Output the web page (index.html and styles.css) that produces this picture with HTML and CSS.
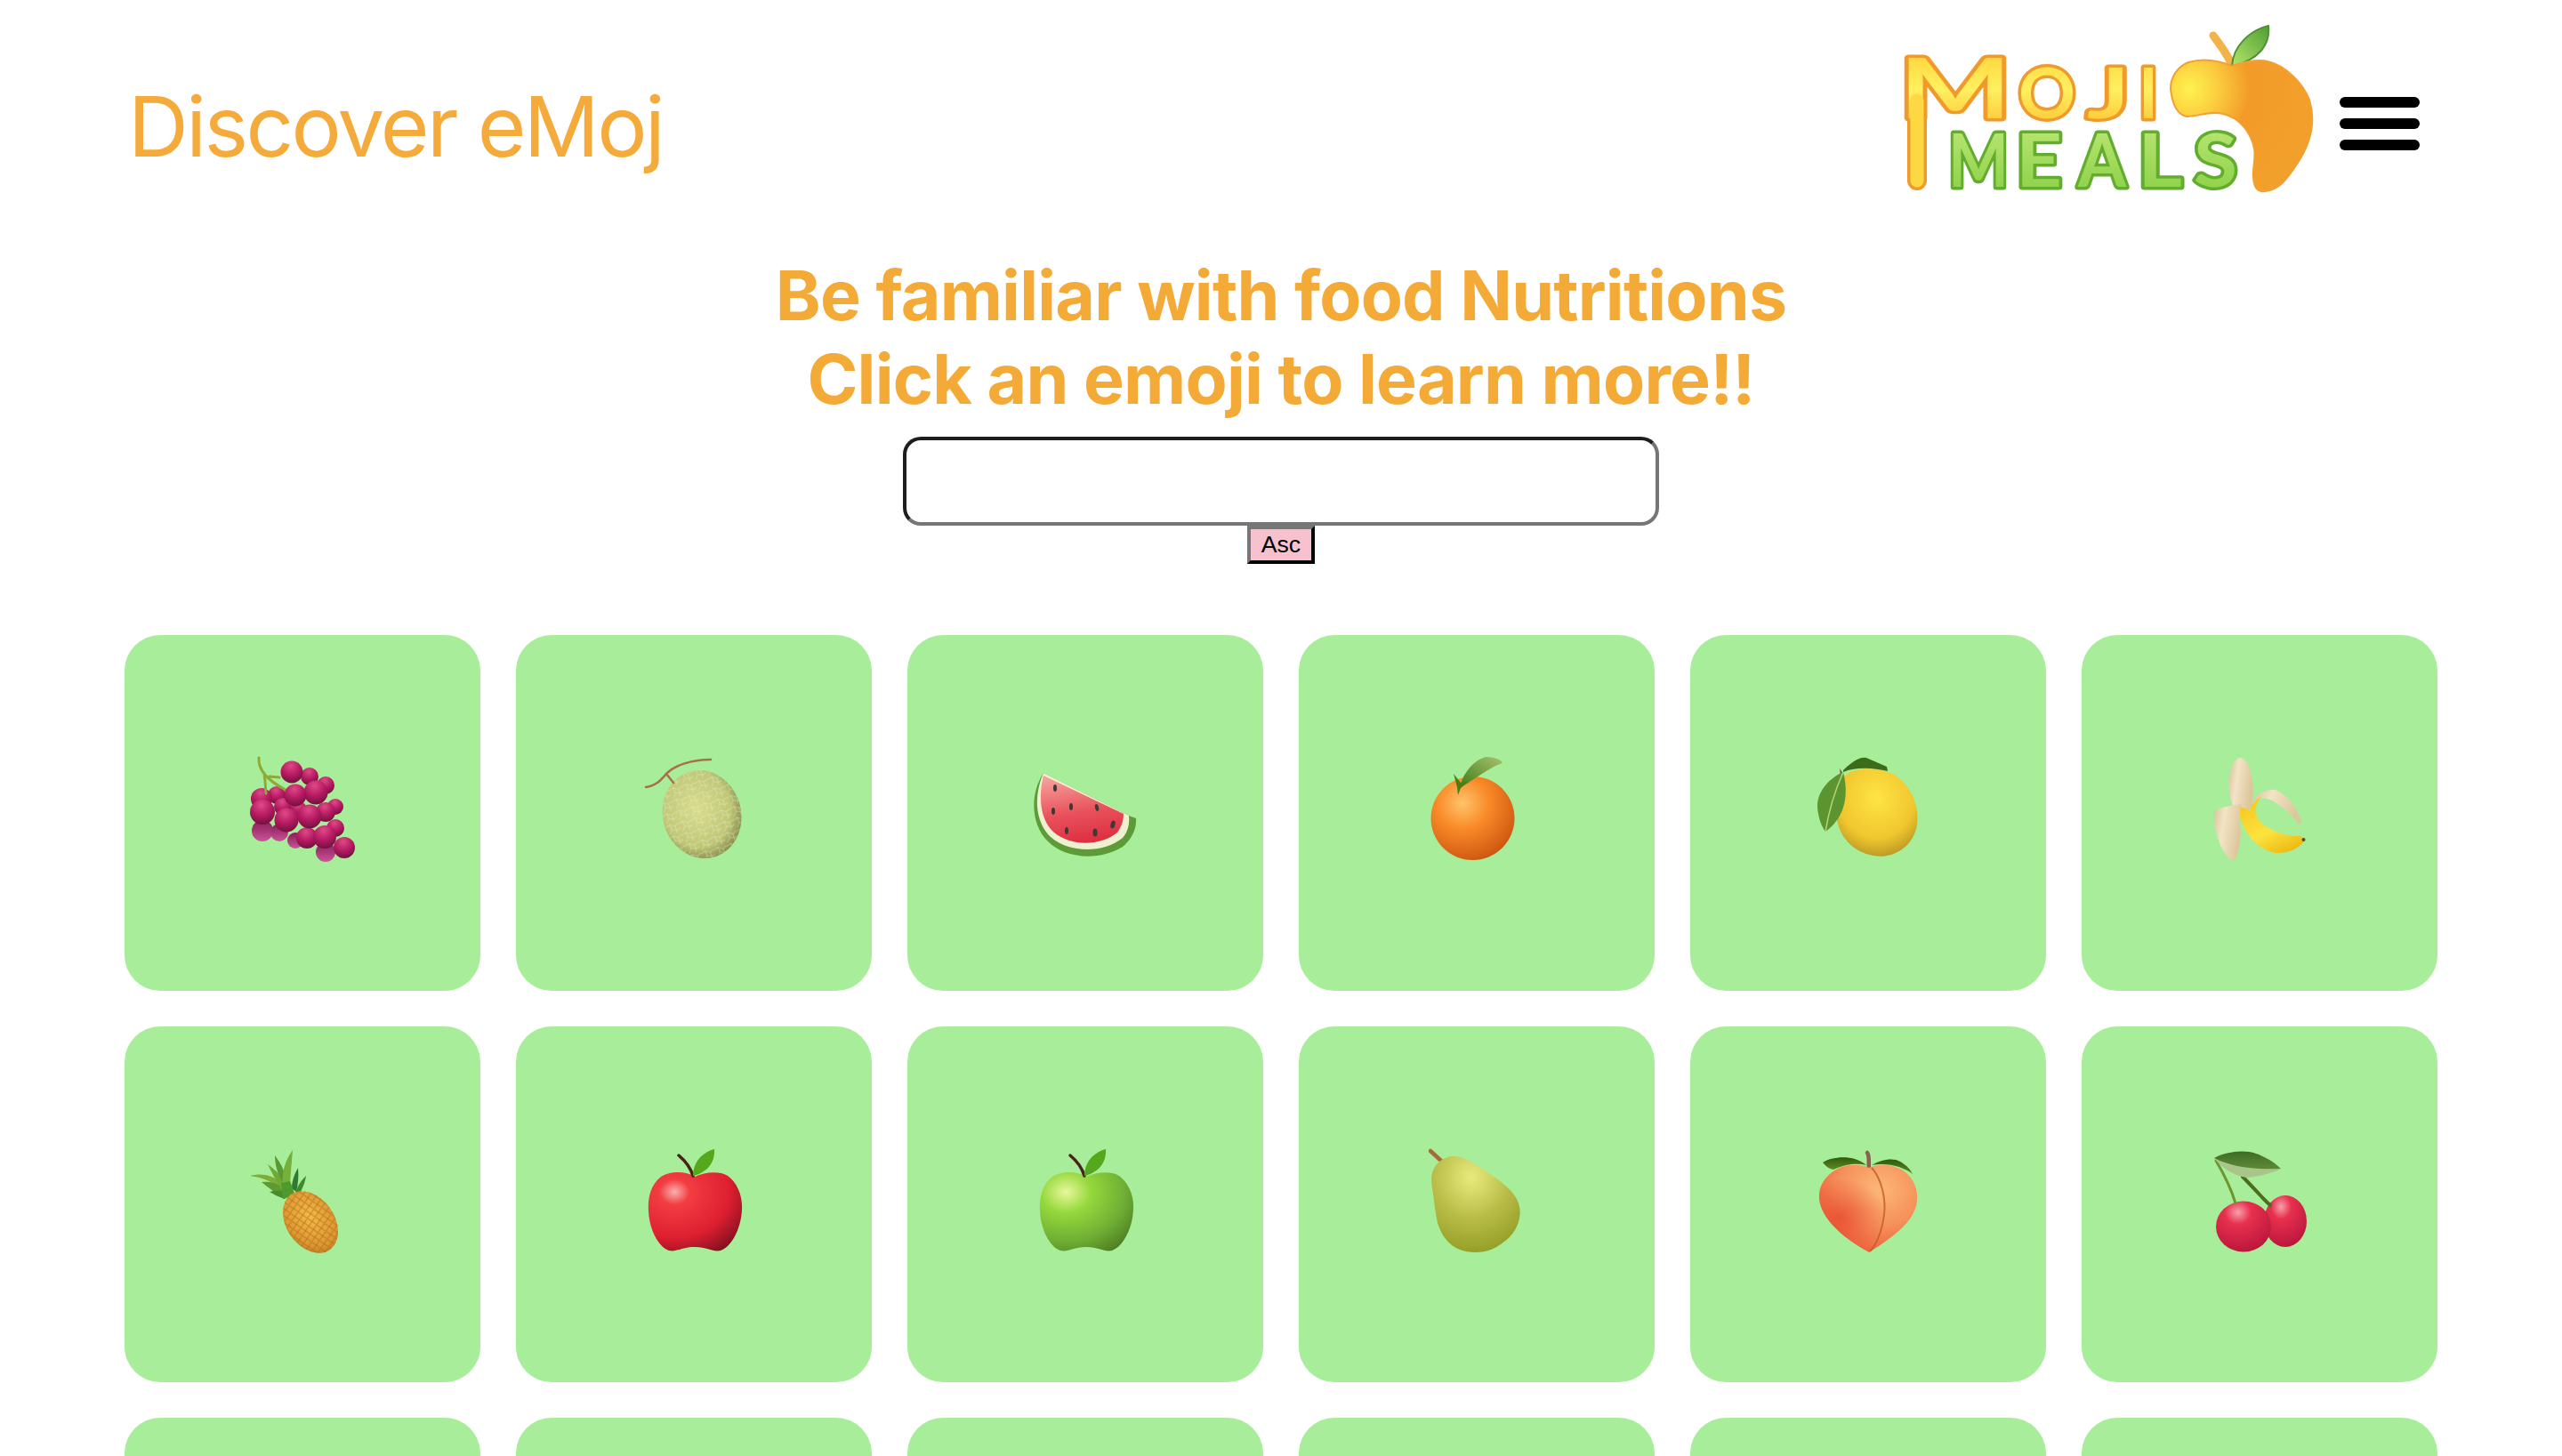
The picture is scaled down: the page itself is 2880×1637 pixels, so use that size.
FILE: index.html
```html
<!DOCTYPE html>
<html lang="en">
<head>
  <meta charset="UTF-8">
  <title>Discover eMoj</title>
  <link rel="stylesheet" href="styles.css">
</head>
<body>
  <header class="top-bar">
    <h1 class="page-title">Discover eMoj</h1>
    <div class="top-bar-right">
      <!-- Logo -->
      <svg class="logo" viewBox="-12 0 472 215" role="img" aria-label="Moji Meals">
        <defs>
          <linearGradient id="logoYellow" gradientUnits="userSpaceOnUse" x1="0" y1="35" x2="0" y2="110">
            <stop offset="0" stop-color="#ffd83f"/>
            <stop offset="0.5" stop-color="#fff060"/>
            <stop offset="1" stop-color="#fdc93a"/>
          </linearGradient>
          <linearGradient id="logoGreen" gradientUnits="userSpaceOnUse" x1="0" y1="118" x2="0" y2="186">
            <stop offset="0" stop-color="#b6e470"/>
            <stop offset="1" stop-color="#8fd24a"/>
          </linearGradient>
          <radialGradient id="logoApple" gradientUnits="userSpaceOnUse" cx="318" cy="72" r="135">
            <stop offset="0" stop-color="#fff24f"/>
            <stop offset="0.22" stop-color="#fbd040"/>
            <stop offset="0.5" stop-color="#f39a28"/>
            <stop offset="1" stop-color="#f2a02c"/>
          </radialGradient>
          <linearGradient id="logoLeaf" x1="0" y1="1" x2="1" y2="0">
            <stop offset="0" stop-color="#b5e46a"/>
            <stop offset="1" stop-color="#4f9e35"/>
          </linearGradient>
        </defs>
        <line class="logo-leg-edge" x1="11" y1="60" x2="11" y2="175"/>
        <g class="logo-moji">
          <text x="-9" y="105" textLength="126" lengthAdjust="spacingAndGlyphs" font-size="94">M</text>
          <text x="125" y="105" textLength="64" lengthAdjust="spacingAndGlyphs" font-size="78">O</text>
          <text x="202" y="105" textLength="48" lengthAdjust="spacingAndGlyphs" font-size="78">J</text>
          <text x="260" y="105" textLength="22" lengthAdjust="spacingAndGlyphs" font-size="78">I</text>
        </g>
        <line class="logo-leg" x1="11" y1="85" x2="11" y2="175"/>
        <g class="logo-meals">
          <text x="46" y="182" textLength="68" lengthAdjust="spacingAndGlyphs" font-size="83">M</text>
          <text x="122" y="182" textLength="52" lengthAdjust="spacingAndGlyphs" font-size="83">E</text>
          <text x="192" y="182" textLength="54" lengthAdjust="spacingAndGlyphs" font-size="83">A</text>
          <text x="259" y="182" textLength="50" lengthAdjust="spacingAndGlyphs" font-size="83">L</text>
          <text x="322" y="182" textLength="49" lengthAdjust="spacingAndGlyphs" font-size="83">S</text>
        </g>
        <path d="M344 12 C351 22 360 32 365 46" fill="none" stroke="#f3b24a" stroke-width="9" stroke-linecap="round"/>
        <path d="M365 46 C366 24 385 6 406 1 C408 20 398 38 367 46 Z" fill="url(#logoLeaf)" stroke="#4f9236" stroke-width="2"/>
        <path d="M365 46 C378 42 393 38 405 41 C428 46 446 69 452 84 C460 110 452 135 439 155 C428 172 418 186 402 187 C394 188 390 184 389 172 C388 160 392 150 390 139 C387 124 376 105 355 100 C340 96 328 103 314 103 C304 101 298 90 296 72 C296 58 304 47 316 42 C333 37 350 40 365 46 Z" fill="url(#logoApple)" stroke="#f2a030" stroke-width="2"/>
      </svg>
      <div class="menu-icon" role="button" aria-label="Menu">
        <span></span>
        <span></span>
        <span></span>
      </div>
    </div>
  </header>

  <section class="intro">
    <h2 class="intro-text">Be familiar with food Nutritions<br>Click an emoji to learn more!!</h2>
    <input class="search-box" type="text">
    <button class="sort-btn" type="button">Asc</button>
  </section>

  <main class="emoji-grid">
    <!-- Grapes -->
    <div class="emoji-card">
      <svg class="emoji" viewBox="0 0 128 128" role="img" aria-label="grapes">
        <defs>
          <radialGradient id="grape" cx="0.45" cy="0.22" r="0.85">
            <stop offset="0" stop-color="#de4a86"/>
            <stop offset="0.5" stop-color="#b61a62"/>
            <stop offset="1" stop-color="#651038"/>
          </radialGradient>
          <linearGradient id="grapeBack" x1="0" y1="0" x2="0" y2="1">
            <stop offset="0" stop-color="#8a1a56"/>
            <stop offset="1" stop-color="#c8559a"/>
          </linearGradient>
        </defs>
        <g fill="url(#grapeBack)">
          <circle cx="19" cy="84" r="12"/>
          <circle cx="38" cy="86" r="10"/>
          <circle cx="56" cy="95" r="9"/>
          <circle cx="90" cy="108" r="11"/>
        </g>
        <g fill="url(#grape)">
          <circle cx="101" cy="57" r="9"/>
          <circle cx="90" cy="33" r="10"/>
          <circle cx="72" cy="23" r="10"/>
          <circle cx="35" cy="44" r="10"/>
          <circle cx="18" cy="48" r="12"/>
          <circle cx="42" cy="57" r="10"/>
          <circle cx="60" cy="60" r="9"/>
          <circle cx="90" cy="63" r="11"/>
          <circle cx="101" cy="81" r="10"/>
          <circle cx="69" cy="92" r="12"/>
        </g>
        <path d="M15 2 C14 14 22 26 45 38 M21 22 C23 30 22 36 23 42 M27 23 L38 24" fill="none" stroke="#8cab36" stroke-width="3" stroke-linecap="round"/>
        <g fill="url(#grape)">
          <circle cx="52" cy="18" r="12.500"/>
          <circle cx="79" cy="41" r="13.500"/>
          <circle cx="56" cy="44" r="12.500"/>
          <circle cx="19" cy="63" r="14"/>
          <circle cx="46" cy="72" r="13.500"/>
          <circle cx="72" cy="68" r="13.500"/>
          <circle cx="89" cy="91" r="13"/>
          <circle cx="111" cy="103" r="12"/>
        </g>
      </svg>
    </div>
    <!-- Melon -->
    <div class="emoji-card">
      <svg class="emoji" viewBox="0 0 128 128" role="img" aria-label="melon">
        <defs>
          <radialGradient id="melonBody" cx="0.45" cy="0.42" r="0.6">
            <stop offset="0" stop-color="#d8dc8e"/>
            <stop offset="0.72" stop-color="#c0c878"/>
            <stop offset="1" stop-color="#868e4c"/>
          </radialGradient>
          <pattern id="melonNet" width="15" height="13" patternUnits="userSpaceOnUse">
            <path d="M0 4 L5 2 L10 5 L15 3 M5 2 L6 8 L2 13 M6 8 L11 10 L15 9 M10 5 L11 10 L10 13" fill="none" stroke="#eef0cc" stroke-width="0.700" stroke-opacity="0.600"/>
          </pattern>
        </defs>
        <ellipse cx="73" cy="65.500" rx="44" ry="50" transform="rotate(-16 73 65.500)" fill="url(#melonBody)"/>
        <ellipse cx="73" cy="65.500" rx="44" ry="50" transform="rotate(-16 73 65.500)" fill="url(#melonNet)"/>
        <path d="M10 35 C22 33 26 28 33 20 C42 11 60 4 83 4 M33 20 L41 30" fill="none" stroke="#a86f48" stroke-width="2.500" stroke-linecap="round"/>
      </svg>
    </div>
    <!-- Watermelon -->
    <div class="emoji-card">
      <svg class="emoji" viewBox="0 0 128 128" role="img" aria-label="watermelon">
        <defs>
          <linearGradient id="melonFlesh" x1="0.3" y1="0" x2="0.5" y2="1">
            <stop offset="0" stop-color="#f6a09c"/>
            <stop offset="0.55" stop-color="#e9525c"/>
            <stop offset="1" stop-color="#dd2f40"/>
          </linearGradient>
        </defs>
        <path d="M17 19 C2 42 2 76 22 96 C42 116 80 118 106 102 C116 94 122 82 121 70 L113 67 Z" fill="#5c9b38"/>
        <path d="M17 19 C6 44 7 74 25 91 C45 109 84 110 106 92 C112 85 114 76 113 67 Z" fill="#eef0cf"/>
        <path d="M17 22 C11 46 13 72 29 86 C47 101 80 102 100 86 C104 80 107 74 107 65 Z" fill="url(#melonFlesh)"/>
        <g fill="#3a3a36">
          <ellipse cx="30" cy="36" rx="2" ry="4"/>
          <ellipse cx="48" cy="57" rx="2" ry="4"/>
          <ellipse cx="77" cy="58" rx="2" ry="4" transform="rotate(-15 77 58)"/>
          <ellipse cx="28" cy="62" rx="2" ry="4"/>
          <ellipse cx="95" cy="77" rx="2.500" ry="4.500" transform="rotate(15 95 77)"/>
          <ellipse cx="43" cy="84" rx="2" ry="4"/>
          <ellipse cx="75" cy="86" rx="2.500" ry="4.500"/>
        </g>
      </svg>
    </div>
    <!-- Orange -->
    <div class="emoji-card">
      <svg class="emoji" viewBox="0 0 128 128" role="img" aria-label="orange">
        <defs>
          <radialGradient id="orangeBody" cx="0.38" cy="0.32" r="0.78">
            <stop offset="0" stop-color="#ffc46a"/>
            <stop offset="0.4" stop-color="#f98a28"/>
            <stop offset="0.85" stop-color="#d45e14"/>
            <stop offset="1" stop-color="#b84f10"/>
          </radialGradient>
          <linearGradient id="orangeLeaf" x1="0" y1="1" x2="1" y2="0">
            <stop offset="0" stop-color="#3f7b12"/>
            <stop offset="1" stop-color="#a8c270"/>
          </linearGradient>
        </defs>
        <circle cx="59.500" cy="70" r="47" fill="url(#orangeBody)"/>
        <path d="M45 36 C48 20 60 5 74 1 C84 1 92 4 93 8 C80 12 68 22 45 36 Z" fill="url(#orangeLeaf)"/>
        <path d="M42 35 L38 20 L46 30 L54 28 L46 36 L43 44 Z" fill="#4c7d14"/>
      </svg>
    </div>
    <!-- Lemon -->
    <div class="emoji-card">
      <svg class="emoji" viewBox="0 0 128 128" role="img" aria-label="lemon">
        <defs>
          <radialGradient id="lemonBody" cx="0.5" cy="0.33" r="0.78">
            <stop offset="0" stop-color="#ffe445"/>
            <stop offset="0.6" stop-color="#f0c62e"/>
            <stop offset="1" stop-color="#a28620"/>
          </radialGradient>
        </defs>
        <path d="M38 22 C50 12 72 12 92 20 C112 32 124 58 118 82 C112 104 90 116 70 112 C48 108 30 92 28 64 C27 48 30 32 38 22 Z" fill="url(#lemonBody)"/>
        <path d="M36 16 C50 2 58 1 62 2 L85 12 L86 17 C70 13 50 12 36 18 Z" fill="#3c6c17"/>
        <path d="M32 14 L36 20 L33 22 Z" fill="#6a5748"/>
        <path d="M36 18 C18 26 6 42 7 58 C8 70 12 80 16 85 C34 72 44 50 36 18 Z" fill="#5c9430"/>
        <path d="M36 18 C28 36 20 60 16 85" fill="none" stroke="#b6d47a" stroke-width="1.500"/>
      </svg>
    </div>
    <!-- Banana -->
    <div class="emoji-card">
      <svg class="emoji" viewBox="0 0 128 128" role="img" aria-label="banana">
        <defs>
          <linearGradient id="bananaPeel" x1="0" y1="0" x2="1" y2="0.300">
            <stop offset="0" stop-color="#d9c29a"/>
            <stop offset="0.4" stop-color="#f2e4c6"/>
            <stop offset="1" stop-color="#ddc69c"/>
          </linearGradient>
          <linearGradient id="bananaFruit" x1="0.100" y1="0" x2="0.700" y2="1">
            <stop offset="0" stop-color="#f6c41d"/>
            <stop offset="0.6" stop-color="#fde33e"/>
            <stop offset="1" stop-color="#eebb16"/>
          </linearGradient>
        </defs>
        <path d="M42 2 C34 3 29 18 30 36 C30 44 32 50 34 55 L52 61 C56 54 58 48 56 30 C55 16 50 3 42 2 Z" fill="url(#bananaPeel)"/>
        <path d="M56 50 C62 42 72 37 82 38 C96 44 108 60 111 75 L108 77 C102 68 92 58 78 50 C72 47 62 46 56 52 Z" fill="url(#bananaPeel)"/>
        <path d="M42 57 L53 61 C55 54 60 48 66 46 C60 52 58 62 62 70 C70 82 90 90 110 90 L115 95 C108 104 96 110 82 109 C64 106 48 90 42 68 Z" fill="url(#bananaFruit)"/>
        <circle cx="113.500" cy="94" r="2" fill="#5a4a20"/>
        <path d="M13 62 C22 57 34 55 44 54 C41 60 41 72 43 85 C42 100 40 112 35 118 C26 114 18 100 15 84 C13 76 12 68 13 62 Z" fill="url(#bananaPeel)"/>
      </svg>
    </div>
    <!-- Pineapple -->
    <div class="emoji-card">
      <svg class="emoji" viewBox="0 0 128 128" role="img" aria-label="pineapple">
        <defs>
          <radialGradient id="pineBody" cx="0.55" cy="0.42" r="0.7">
            <stop offset="0" stop-color="#f4bb48"/>
            <stop offset="0.7" stop-color="#dd9630"/>
            <stop offset="1" stop-color="#a86a1e"/>
          </radialGradient>
          <pattern id="pineScale" width="9" height="9" patternUnits="userSpaceOnUse" patternTransform="rotate(25)">
            <path d="M0 4.500 L4.500 0 L9 4.500 L4.500 9 Z" fill="none" stroke="#b06e1c" stroke-width="1"/>
          </pattern>
        </defs>
        <path d="M36 44 C26 36 16 34 5 32 C16 29 30 30 40 40 Z" fill="#7dae38"/>
        <path d="M38 55 C30 48 24 44 18 39 C28 38 38 40 44 48 Z" fill="#5e9a30"/>
        <path d="M42 50 C36 40 30 30 25 19 C34 26 42 32 46 44 Z" fill="#6eaa34"/>
        <path d="M42 40 C36 30 33 20 33 9 C38 16 44 24 45 36 Z" fill="#5a9a30"/>
        <path d="M52 46 C52 38 55 30 59 23 C60 32 59 42 57 50 Z" fill="#2f7a30"/>
        <path d="M56 52 C58 44 62 38 68 32 C67 40 63 48 60 54 Z" fill="#3d8a2c"/>
        <path d="M42 45 C40 28 45 14 53 3 C52 18 50 32 50 48 Z" fill="#74b03a"/>
        <path d="M44 58 C38 56 32 53 27 50 C34 48 42 48 50 52 Z" fill="#468c2a"/>
        <path d="M40 40 L50 38 L56 54 L42 58 Z" fill="#4f9a2e"/>
        <ellipse cx="73" cy="84" rx="27" ry="38" transform="rotate(-35 73 84)" fill="url(#pineBody)"/>
        <ellipse cx="73" cy="84" rx="27" ry="38" transform="rotate(-35 73 84)" fill="url(#pineScale)"/>
      </svg>
    </div>
    <!-- Red apple -->
    <div class="emoji-card">
      <svg class="emoji" viewBox="0 0 128 128" role="img" aria-label="red apple">
        <defs>
          <radialGradient id="appleRed" cx="0.28" cy="0.25" r="0.9">
            <stop offset="0" stop-color="#fbb0ae"/>
            <stop offset="0.18" stop-color="#f23d42"/>
            <stop offset="0.65" stop-color="#de1f30"/>
            <stop offset="1" stop-color="#801020"/>
          </radialGradient>
        </defs>
        <path d="M65 33 C55 27 38 26 27 33 C15 42 12 58 13 72 C14 92 24 112 36 116 C45 118 50 112 65 112 C80 112 85 118 94 116 C106 112 117 92 118 70 C119 55 113 40 102 32 C92 26 76 28 65 33 Z" fill="url(#appleRed)"/>
        <path d="M47 9 C53 14 60 22 63 32" fill="none" stroke="#4a2318" stroke-width="3.500" stroke-linecap="round"/>
        <path d="M63 32 C63 18 72 6 87 2 C88 16 80 28 63 32 Z" fill="#55a81c"/>
      </svg>
    </div>
    <!-- Green apple -->
    <div class="emoji-card">
      <svg class="emoji" viewBox="0 0 128 128" role="img" aria-label="green apple">
        <defs>
          <radialGradient id="appleGreen" cx="0.28" cy="0.25" r="0.9">
            <stop offset="0" stop-color="#e8f79a"/>
            <stop offset="0.3" stop-color="#94d83c"/>
            <stop offset="0.7" stop-color="#6fae34"/>
            <stop offset="1" stop-color="#4d7d22"/>
          </radialGradient>
        </defs>
        <path d="M65 33 C55 27 38 26 27 33 C15 42 12 58 13 72 C14 92 24 112 36 116 C45 118 50 112 65 112 C80 112 85 118 94 116 C106 112 117 92 118 70 C119 55 113 40 102 32 C92 26 76 28 65 33 Z" fill="url(#appleGreen)"/>
        <path d="M47 9 C53 14 60 22 63 32" fill="none" stroke="#4a2318" stroke-width="3.500" stroke-linecap="round"/>
        <path d="M63 32 C63 18 72 6 87 2 C88 16 80 28 63 32 Z" fill="#55a81c"/>
      </svg>
    </div>
    <!-- Pear -->
    <div class="emoji-card">
      <svg class="emoji" viewBox="0 0 128 128" role="img" aria-label="pear">
        <defs>
          <radialGradient id="pearBody" cx="0.45" cy="0.22" r="0.85">
            <stop offset="0" stop-color="#e9ea7c"/>
            <stop offset="0.5" stop-color="#b9bd48"/>
            <stop offset="1" stop-color="#8f9a22"/>
          </radialGradient>
        </defs>
        <path d="M12 4 L25 16" fill="none" stroke="#a86a34" stroke-width="4.500" stroke-linecap="round"/>
        <path d="M37 10 C48 10 58 16 68 23 C80 31 96 40 105 52 C112 61 114 70 112 80 C109 96 96 108 80 115 C70 119 55 119 45 115 C32 110 24 98 20 85 C17 72 16 58 14 46 C12 34 13 24 22 16 C27 12 32 10 37 10 Z" fill="url(#pearBody)"/>
      </svg>
    </div>
    <!-- Peach -->
    <div class="emoji-card">
      <svg class="emoji" viewBox="0 0 128 128" role="img" aria-label="peach">
        <defs>
          <radialGradient id="peachBody" cx="0.62" cy="0.28" r="0.85">
            <stop offset="0" stop-color="#fcb878"/>
            <stop offset="0.5" stop-color="#f6905a"/>
            <stop offset="1" stop-color="#e8502f"/>
          </radialGradient>
          <radialGradient id="peachCheek" cx="0.22" cy="0.6" r="0.45">
            <stop offset="0" stop-color="#e53f28" stop-opacity="0.650"/>
            <stop offset="1" stop-color="#e53f28" stop-opacity="0"/>
          </radialGradient>
          <linearGradient id="peachLeaf" x1="0" y1="0" x2="0" y2="1">
            <stop offset="0" stop-color="#2f5a0c"/>
            <stop offset="1" stop-color="#5f8c22"/>
          </linearGradient>
        </defs>
        <path d="M13 17 C24 10 48 8 62 20 C48 17 36 20 25 25 C20 24 16 21 13 17 Z" fill="url(#peachLeaf)"/>
        <path d="M68 20 C78 14 92 11 100 16 C107 20 112 25 114 30 C104 22 86 17 68 20 Z" fill="url(#peachLeaf)"/>
        <path d="M63 6 C66 10 64 16 65 23" fill="none" stroke="#8a6050" stroke-width="4.500" stroke-linecap="round"/>
        <path d="M65 23 C55 19 40 18 28 25 C14 33 8 45 9 58 C11 78 32 100 65 118 C84 106 112 88 118 66 C122 50 116 34 102 25 C90 19 76 18 65 23 Z" fill="url(#peachBody)"/>
        <path d="M65 23 C55 19 40 18 28 25 C14 33 8 45 9 58 C11 78 32 100 65 118 C84 106 112 88 118 66 C122 50 116 34 102 25 C90 19 76 18 65 23 Z" fill="url(#peachCheek)"/>
        <path d="M68 23 C80 36 84 60 82 76 C80 90 76 106 66 117" fill="none" stroke="#c05c26" stroke-width="2" stroke-opacity="0.800"/>
      </svg>
    </div>
    <!-- Cherries -->
    <div class="emoji-card">
      <svg class="emoji" viewBox="0 0 128 128" role="img" aria-label="cherries">
        <defs>
          <radialGradient id="cherryRed" cx="0.4" cy="0.22" r="0.85">
            <stop offset="0" stop-color="#f7a0aa"/>
            <stop offset="0.28" stop-color="#e8304e"/>
            <stop offset="1" stop-color="#b5143a"/>
          </radialGradient>
          <linearGradient id="cherryLeafTop" x1="0" y1="0" x2="0" y2="1">
            <stop offset="0" stop-color="#3f6c25"/>
            <stop offset="1" stop-color="#5d8a38"/>
          </linearGradient>
        </defs>
        <ellipse cx="93" cy="83" rx="24" ry="29" fill="url(#cherryRed)"/>
        <ellipse cx="46" cy="89" rx="31" ry="28.500" fill="url(#cherryRed)"/>
        <path d="M15 15 C24 30 32 46 37 63" fill="none" stroke="#6f9430" stroke-width="3" stroke-linecap="round"/>
        <path d="M45 33 C56 44 66 56 76 65" fill="none" stroke="#4a6e1c" stroke-width="4" stroke-linecap="round"/>
        <path d="M13 12 C22 24 36 32 50 34 C64 33 78 29 88 24 C66 25 36 24 13 12 Z" fill="#a9c58a"/>
        <path d="M13 12 C26 5 46 2 60 7 C72 11 82 18 88 24 C66 25 36 24 13 12 Z" fill="url(#cherryLeafTop)"/>
      </svg>
    </div>
    <!-- Next row -->
    <div class="emoji-card"></div>
    <div class="emoji-card"></div>
    <div class="emoji-card"></div>
    <div class="emoji-card"></div>
    <div class="emoji-card"></div>
    <div class="emoji-card"></div>
  </main>
</body>
</html>
```

FILE: styles.css
```css
/* Page */
html, body {
  height: 100%;
  margin: 0;
  overflow: hidden;
  background-color: #fff;
  font-family: Inter, "Liberation Sans", sans-serif;
}

/* Header */
.top-bar {
  display: flex;
  justify-content: space-between;
  align-items: flex-start;
  height: 285px;
  padding: 0 160px 0 144px;
  box-sizing: border-box;
}

.page-title {
  margin: 84px 0 0;
  font-size: 94px;
  font-weight: 400;
  line-height: 116px;
  letter-spacing: -2.600px;
  color: #f5ab3c;
}

.top-bar-right {
  display: flex;
  align-items: flex-start;
  gap: 26px;
  padding-top: 28px;
}

.logo {
  width: 472px;
  height: 215px;
}

.logo text {
  font-family: Lato, sans-serif;
  font-weight: 700;
  paint-order: stroke;
  stroke-width: 7px;
  stroke-linejoin: round;
}

.logo-moji text {
  fill: url(#logoYellow);
  stroke: #f19a2c;
}

.logo-meals text {
  fill: url(#logoGreen);
  stroke: #63ad2e;
}

.logo-leg-edge {
  stroke: #f19a2c;
  stroke-width: 22px;
  stroke-linecap: round;
}

.logo-leg {
  stroke: #fcd943;
  stroke-width: 15px;
  stroke-linecap: round;
}

.menu-icon {
  display: flex;
  flex-direction: column;
  gap: 12px;
  width: 90px;
  margin-top: 81px;
}

.menu-icon span {
  display: block;
  height: 12px;
  border-radius: 6px;
  background-color: #000;
}

/* Heading and search */
.intro {
  display: flex;
  flex-direction: column;
  align-items: center;
}

.intro-text {
  margin: 0 0 18px;
  font-size: 77px;
  font-weight: 700;
  line-height: 94px;
  letter-spacing: -0.800px;
  text-align: center;
  color: #f3aa37;
}

.search-box {
  width: 850px;
  height: 100px;
  padding: 0 20px;
  border: 4px solid;
  border-color: #1e1e1e #767676 #767676 #1e1e1e;
  border-radius: 20px;
  box-sizing: border-box;
  background-color: #fff;
}

.sort-btn {
  width: 76px;
  height: 43px;
  padding: 0;
  border: 4px outset;
  border-color: #767676 #1e1e1e #1e1e1e #767676;
  background-color: #f7c2cd;
  font-family: "Liberation Sans", Arial, sans-serif;
  font-size: 26.600px;
  color: #000;
}

/* Emoji cards */
.emoji-grid {
  display: grid;
  grid-template-columns: repeat(6, 400px);
  gap: 40px;
  margin-top: 80px;
  padding: 0 140px;
}

.emoji-card {
  display: flex;
  justify-content: center;
  align-items: flex-start;
  height: 400px;
  border-radius: 40px;
  background-color: #a8ee9a;
}

.emoji {
  width: 128px;
  height: 128px;
  margin-top: 136px;
}
```
